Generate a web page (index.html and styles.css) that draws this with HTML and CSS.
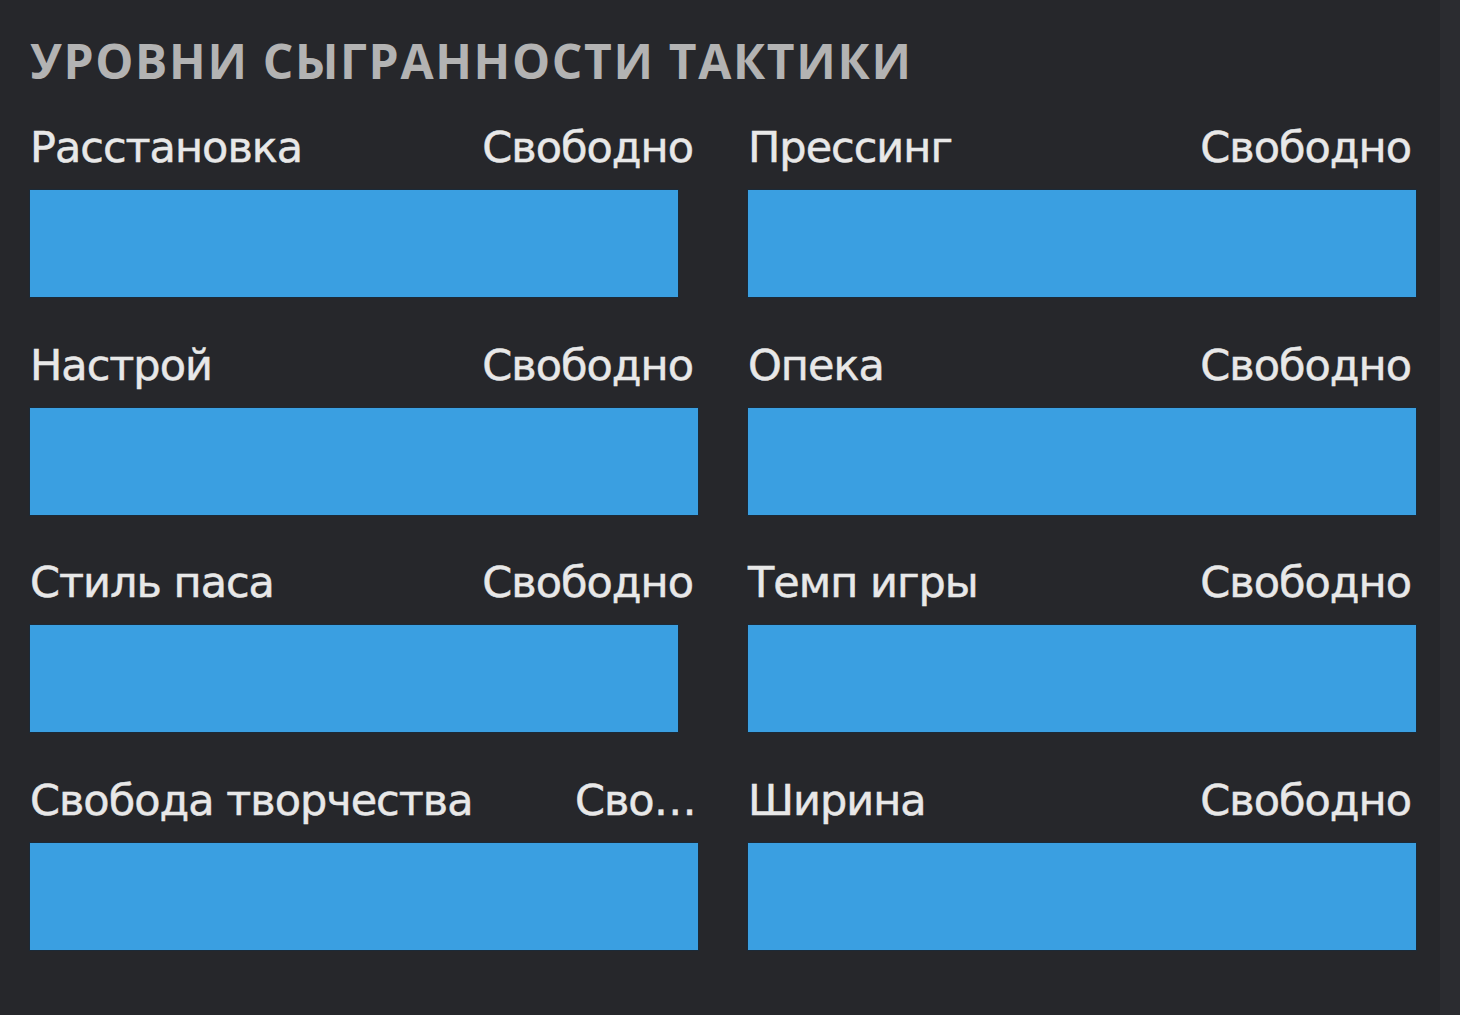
FILE: index.html
```html
<!DOCTYPE html>
<html lang="ru">
<head>
<meta charset="utf-8">
<title>Уровни сыгранности тактики</title>
<link rel="stylesheet" href="styles.css">
</head>
<body>
<main class="panel">
  <h1 class="title">УРОВНИ СЫГРАННОСТИ ТАКТИКИ</h1>
  <div class="grid">
    <section class="cell">
      <div class="head"><span class="name">Расстановка</span><span class="value">Свободно</span></div>
      <div class="bar bar-short"></div>
    </section>
    <section class="cell">
      <div class="head"><span class="name">Прессинг</span><span class="value">Свободно</span></div>
      <div class="bar"></div>
    </section>
    <section class="cell">
      <div class="head"><span class="name">Настрой</span><span class="value">Свободно</span></div>
      <div class="bar"></div>
    </section>
    <section class="cell">
      <div class="head"><span class="name">Опека</span><span class="value">Свободно</span></div>
      <div class="bar"></div>
    </section>
    <section class="cell">
      <div class="head"><span class="name">Стиль паса</span><span class="value">Свободно</span></div>
      <div class="bar bar-short"></div>
    </section>
    <section class="cell">
      <div class="head"><span class="name">Темп игры</span><span class="value">Свободно</span></div>
      <div class="bar"></div>
    </section>
    <section class="cell">
      <div class="head"><span class="name">Свобода творчества</span><span class="value value-cut">Свободно</span></div>
      <div class="bar"></div>
    </section>
    <section class="cell">
      <div class="head"><span class="name">Ширина</span><span class="value">Свободно</span></div>
      <div class="bar"></div>
    </section>
  </div>
</main>
</body>
</html>
```

FILE: styles.css
```css
html, body {
  margin: 0;
  padding: 0;
  height: 100%;
}

body {
  background: linear-gradient(to right, #26272b 0, #26272b 1440px, #2b2c30 1440px);
  font-family: "DejaVu Sans", "Noto Sans", sans-serif;
  color: #e8e8e8;
  overflow: hidden;
}

.panel {
  padding: 37px 44px 0 30px;
}

.title {
  margin: 0;
  font-family: "Open Sans", "DejaVu Sans", sans-serif;
  font-weight: 700;
  font-size: 48px;
  line-height: 48px;
  color: #b3b3b3;
  letter-spacing: 1.65px;
}

.grid {
  margin-top: 36px;
  display: grid;
  grid-template-columns: 668px 668px;
  column-gap: 50px;
  row-gap: 41.67px;
}

.cell {
  display: flex;
  flex-direction: column;
  min-width: 0;
}

.head {
  display: flex;
  justify-content: space-between;
  align-items: baseline;
  gap: 20px;
  height: 52px;
  line-height: 52px;
  font-size: 43px;
  letter-spacing: -1px;
  -webkit-text-stroke: 0.5px #e8e8e8;
  padding-right: 5px;
  margin-bottom: 17px;
  white-space: nowrap;
}

.name {
  flex: 0 0 auto;
}

.value {
  flex: 0 1 auto;
  min-width: 0;
  overflow: hidden;
  text-overflow: ellipsis;
}

.value-cut {
  max-width: 122px;
  margin-right: -4px;
}

.bar {
  height: 107px;
  width: 668px;
  background: #3a9fe1;
  box-shadow: 0 0 0 1px #1b2a38;
}

.bar-short {
  width: 648px;
}
```
